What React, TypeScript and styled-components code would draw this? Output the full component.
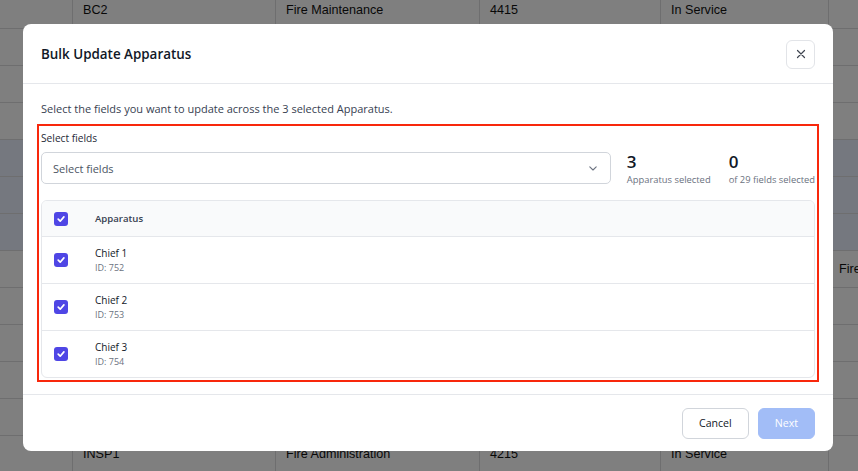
import React from "react";
import styled, { createGlobalStyle } from "styled-components";

const GlobalStyle = createGlobalStyle`
  html, body {
    margin: 0;
    padding: 0;
    width: 858px;
    height: 471px;
    overflow: hidden;
    background: #ffffff;
  }
  * { box-sizing: border-box; }
`;

/* ---------- background list of apparatus ---------- */

const Page = styled.div`
  position: relative;
  width: 858px;
  height: 471px;
  overflow: hidden;
  font-family: "Liberation Sans", Arial, sans-serif;
`;

const Table = styled.div`
  display: flex;
  flex-direction: column;
  margin-top: -8px;
`;

const Row = styled.div<{ $selected?: boolean }>`
  display: grid;
  grid-template-columns: 72px 203px 204px 181px 168px 1fr;
  height: 37px;
  border-bottom: 1px solid #dcdcdf;
  background: ${(p) => (p.$selected ? "#eaf0ff" : "#ffffff")};
`;

const Cell = styled.div`
  display: flex;
  align-items: center;
  padding-left: 10px;
  font-size: 12.6px;
  color: #111111;
  white-space: nowrap;
  overflow: hidden;
  & + & {
    border-left: 1px solid #dcdcdf;
  }
`;

const Overlay = styled.div`
  position: absolute;
  inset: 0;
  background: rgba(0, 0, 0, 0.5);
`;

/* ---------- dialog ---------- */

const Dialog = styled.div`
  position: absolute;
  left: 23px;
  top: 24px;
  width: 810px;
  height: 427px;
  background: #ffffff;
  border-radius: 8px;
  display: flex;
  flex-direction: column;
  font-family: "Open Sans", "Noto Sans", sans-serif;
  color: #111827;
`;

const Header = styled.div`
  flex-shrink: 0;
  height: 60px;
  padding: 0 18px;
  display: flex;
  align-items: center;
  justify-content: space-between;
  border-bottom: 1px solid #e5e7eb;
`;

const Title = styled.h2`
  margin: 0;
  font-size: 13.4px;
  font-weight: 600;
  color: #111827;
`;

const IconButton = styled.button`
  width: 29px;
  height: 29px;
  border: 1px solid #e2e4e8;
  border-radius: 6px;
  background: #ffffff;
  display: flex;
  align-items: center;
  justify-content: center;
  padding: 0;
  margin-top: 1px;
  color: #374151;
`;

const Body = styled.div`
  flex-shrink: 0;
  height: 311px;
  padding: 17px 18px 17px;
  display: flex;
  flex-direction: column;
  border-bottom: 1px solid #e5e7eb;
`;

const Description = styled.p`
  margin: 0;
  font-size: 11px;
  line-height: 16px;
  color: #374151;
`;

const Section = styled.div`
  margin-top: 11px;
  outline: 2px solid #f8280c;
  outline-offset: 2px;
  display: flex;
  flex-direction: column;
`;

const Label = styled.div`
  font-size: 10.2px;
  line-height: 20px;
  color: #1f2937;
  margin-bottom: 4px;
`;

const Controls = styled.div`
  display: flex;
  align-items: flex-start;
  height: 32px;
  gap: 16px;
`;

const SelectBox = styled.div`
  flex: 1;
  height: 32px;
  border: 1px solid #d1d5db;
  border-radius: 5px;
  padding: 0 13px 0 11px;
  display: flex;
  align-items: center;
  justify-content: space-between;
  font-size: 11px;
  color: #4b5563;
`;

const Stats = styled.div`
  display: flex;
  gap: 18px;
`;

const Stat = styled.div`
  display: flex;
  flex-direction: column;
`;

const StatValue = styled.div`
  font-size: 17px;
  font-weight: 600;
  line-height: 20px;
  color: #111827;
`;

const StatLabel = styled.div`
  font-size: 9.4px;
  line-height: 13px;
  margin-top: 1px;
  color: #6b7280;
  white-space: nowrap;
`;

const List = styled.div`
  margin-top: 16px;
  border: 1px solid #e5e7eb;
  border-radius: 6px;
  overflow: hidden;
`;

const ListHead = styled.div`
  height: 36px;
  background: #f9fafb;
  display: flex;
  align-items: center;
  padding-left: 12px;
  gap: 27px;
  font-size: 9.6px;
  font-weight: 600;
  color: #374151;
  border-bottom: 1px solid #e5e7eb;
`;

const ListRow = styled.div`
  height: 46px;
  display: flex;
  align-items: center;
  padding-left: 12px;
  gap: 27px;
  & + & {
    height: 47px;
    border-top: 1px solid #e5e7eb;
  }
`;

const Item = styled.div`
  display: flex;
  flex-direction: column;
  gap: 1px;
`;

const ItemName = styled.div`
  font-size: 10px;
  line-height: 14px;
  color: #111827;
`;

const ItemId = styled.div`
  font-size: 9px;
  line-height: 13px;
  color: #6b7280;
`;

const Check = styled.span`
  width: 14px;
  height: 14px;
  border-radius: 3px;
  background: #4f46e5;
  display: inline-flex;
  align-items: center;
  justify-content: center;
  flex-shrink: 0;
`;

const Footer = styled.div`
  flex: 1;
  padding: 0 18px;
  display: flex;
  align-items: center;
  justify-content: flex-end;
  gap: 9px;
`;

const Button = styled.button<{ $primary?: boolean }>`
  height: 31px;
  padding: 0 16px;
  border-radius: 6px;
  font-family: "Open Sans", "Noto Sans", sans-serif;
  font-size: 10.6px;
  border: 1px solid ${(p) => (p.$primary ? "#a2bdf7" : "#d1d5db")};
  background: ${(p) => (p.$primary ? "#a2bdf7" : "#ffffff")};
  color: ${(p) => (p.$primary ? "#ffffff" : "#111827")};
`;

const CheckMark = () => (
  <Check>
    <svg width="10" height="10" viewBox="0 0 10 10" fill="none">
      <path d="M2.2 5.2 L4.2 7.2 L7.9 2.9" stroke="#fff" strokeWidth="1.7" strokeLinecap="round" strokeLinejoin="round" />
    </svg>
  </Check>
);

const rows: { cells: string[]; selected?: boolean }[] = [
  { cells: ["", "BC2", "Fire Maintenance", "4415", "In Service", ""] },
  { cells: ["", "BC3", "Fire Maintenance", "4416", "In Service", ""] },
  { cells: ["", "BC4", "Fire Maintenance", "4417", "In Service", ""] },
  { cells: ["", "BC5", "Fire Maintenance", "4418", "In Service", ""] },
  { cells: ["", "Chief 1", "Fire Administration", "752", "In Service", ""], selected: true },
  { cells: ["", "Chief 2", "Fire Administration", "753", "In Service", ""], selected: true },
  { cells: ["", "Chief 3", "Fire Administration", "754", "In Service", ""], selected: true },
  { cells: ["", "E1", "Fire Suppression", "4101", "In Service", "Fire"] },
  { cells: ["", "E2", "Fire Suppression", "4102", "In Service", ""] },
  { cells: ["", "E3", "Fire Suppression", "4103", "In Service", ""] },
  { cells: ["", "E4", "Fire Suppression", "4104", "In Service", ""] },
  { cells: ["", "E5", "Fire Suppression", "4105", "In Service", ""] },
  { cells: ["", "INSP1", "Fire Administration", "4215", "In Service", ""] },
];

const apparatus = [
  { name: "Chief 1", id: 752 },
  { name: "Chief 2", id: 753 },
  { name: "Chief 3", id: 754 },
];

export default function App() {
  return (
    <Page>
      <GlobalStyle />
      <Table>
        {rows.map((r, i) => (
          <Row key={i} $selected={r.selected}>
            {r.cells.map((c, j) => (
              <Cell key={j}>{c}</Cell>
            ))}
          </Row>
        ))}
      </Table>
      <Overlay />
      <Dialog role="dialog" aria-label="Bulk Update Apparatus">
        <Header>
          <Title>Bulk Update Apparatus</Title>
          <IconButton aria-label="Close">
            <svg width="10" height="10" viewBox="0 0 10 10">
              <path d="M1.5 1.5 L8.5 8.5 M8.5 1.5 L1.5 8.5" stroke="#3f4550" strokeWidth="1.2" strokeLinecap="round" />
            </svg>
          </IconButton>
        </Header>
        <Body>
          <Description>Select the fields you want to update across the 3 selected Apparatus.</Description>
          <Section>
            <Label>Select fields</Label>
            <Controls>
              <SelectBox>
                <span>Select fields</span>
                <svg width="8" height="5" viewBox="0 0 8 5">
                  <path d="M0.8 0.8 L4 4 L7.2 0.8" stroke="#6b7280" strokeWidth="1.1" fill="none" strokeLinecap="round" strokeLinejoin="round" />
                </svg>
              </SelectBox>
              <Stats>
                <Stat>
                  <StatValue>3</StatValue>
                  <StatLabel>Apparatus selected</StatLabel>
                </Stat>
                <Stat>
                  <StatValue>0</StatValue>
                  <StatLabel>of 29 fields selected</StatLabel>
                </Stat>
              </Stats>
            </Controls>
            <List>
              <ListHead>
                <CheckMark />
                <span>Apparatus</span>
              </ListHead>
              {apparatus.map((a) => (
                <ListRow key={a.id}>
                  <CheckMark />
                  <Item>
                    <ItemName>{a.name}</ItemName>
                    <ItemId>ID: {a.id}</ItemId>
                  </Item>
                </ListRow>
              ))}
            </List>
          </Section>
        </Body>
        <Footer>
          <Button>Cancel</Button>
          <Button $primary>Next</Button>
        </Footer>
      </Dialog>
    </Page>
  );
}
